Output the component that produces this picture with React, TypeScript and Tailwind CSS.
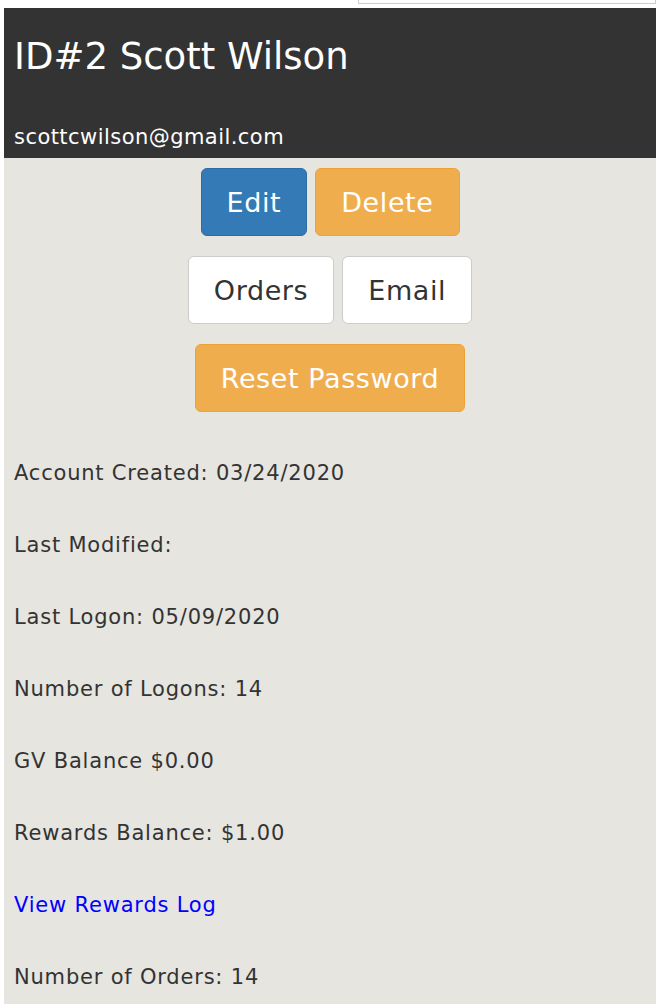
import React from "react";

const infoRows: { label: string; link?: boolean }[] = [
  { label: "Account Created: 03/24/2020" },
  { label: "Last Modified:" },
  { label: "Last Logon: 05/09/2020" },
  { label: "Number of Logons: 14" },
  { label: "GV Balance $0.00" },
  { label: "Rewards Balance: $1.00" },
  { label: "View Rewards Log", link: true },
  { label: "Number of Orders: 14" },
];

const btn = "rounded-[6px] border px-[25px] h-[68px] text-[27px] tracking-[0.6px] leading-none";

const App: React.FC = () => {
  return (
    <div className="min-h-screen bg-white pl-[4px] pr-[10px] [font-family:'DejaVu_Sans',Verdana,sans-serif] text-[#333]">
      {/* search box edge */}
      <div className="flex justify-end">
        <div className="-mt-[40px] h-[44px] w-[298px] border border-[#ccc] bg-white" />
      </div>

      <div className="mt-[4px] bg-[#e6e5e0]">
        {/* header */}
        <div className="bg-[#333] px-[10px] pt-[27px] pb-[7px] text-white">
          <h1 className="text-[37px] leading-[1.2]">ID#2 Scott Wilson</h1>
          <p className="mt-[44px] text-[21px] tracking-[0.45px] leading-[28px]">scottcwilson@gmail.com</p>
        </div>

        {/* actions */}
        <div className="flex flex-col items-center gap-[20px] pt-[10px]">
          <div className="flex gap-[8px]">
            <button className={`${btn} border-[#2e6da4] bg-[#337ab7] text-white`}>Edit</button>
            <button className={`${btn} border-[#eea236] bg-[#f0ad4e] text-white`}>Delete</button>
          </div>
          <div className="flex gap-[8px]">
            <button className={`${btn} border-[#ccc] bg-white text-[#333]`}>Orders</button>
            <button className={`${btn} border-[#ccc] bg-white text-[#333]`}>Email</button>
          </div>
          <button className={`${btn} border-[#eea236] bg-[#f0ad4e] text-white`}>Reset Password</button>
        </div>

        {/* details */}
        <div className="px-[10px] pt-[31px] pb-[20px]">
          {infoRows.map((row) => (
            <p key={row.label} className="h-[72px] text-[21px] tracking-[0.8px] leading-[60px]">
              {row.link ? <a href="#" className="text-[#0000ff]">{row.label}</a> : row.label}
            </p>
          ))}
        </div>
      </div>
    </div>
  );
};

export default App;
